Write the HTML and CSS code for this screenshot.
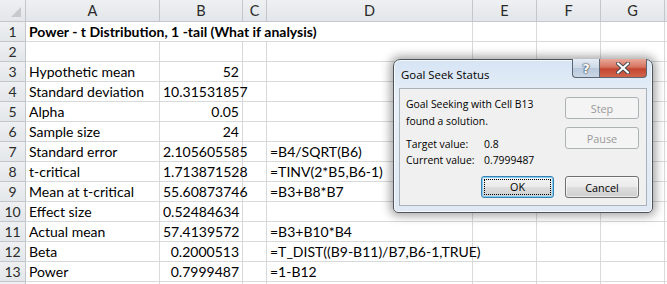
FILE: index.html
```html
<!DOCTYPE html>
<html lang="en">
<head>
    <meta charset="UTF-8">
    <title>Power - t Distribution</title>
    <link rel="stylesheet" href="styles.css">
</head>
<body>
    <div class="sheet">
        <div class="hd corner">
            <svg width="26" height="22" viewBox="0 0 26 22"><polygon points="21,7 21,17 11,17" fill="#c6c9cd"/></svg>
        </div>
        <div class="hd col">A</div>
        <div class="hd col">B</div>
        <div class="hd col">C</div>
        <div class="hd col">D</div>
        <div class="hd col">E</div>
        <div class="hd col">F</div>
        <div class="hd col">G</div>
        <div class="hd col"></div>

        <div class="hd row">1</div>
        <div class="c title">Power - t Distribution, 1 -tail (What if analysis)</div>
        <div class="c"></div><div class="c"></div><div class="c"></div><div class="c"></div>

        <div class="hd row">2</div>
        <div class="c"></div><div class="c"></div><div class="c"></div><div class="c"></div><div class="c"></div><div class="c"></div><div class="c"></div><div class="c"></div>

        <div class="hd row">3</div>
        <div class="c">Hypothetic mean</div><div class="c num">52</div><div class="c"></div><div class="c"></div><div class="c"></div><div class="c"></div><div class="c"></div><div class="c"></div>

        <div class="hd row">4</div>
        <div class="c">Standard deviation</div><div class="c num">10.31531857</div><div class="c"></div><div class="c"></div><div class="c"></div><div class="c"></div><div class="c"></div><div class="c"></div>

        <div class="hd row">5</div>
        <div class="c">Alpha</div><div class="c num">0.05</div><div class="c"></div><div class="c"></div><div class="c"></div><div class="c"></div><div class="c"></div><div class="c"></div>

        <div class="hd row">6</div>
        <div class="c">Sample size</div><div class="c num">24</div><div class="c"></div><div class="c"></div><div class="c"></div><div class="c"></div><div class="c"></div><div class="c"></div>

        <div class="hd row">7</div>
        <div class="c">Standard error</div><div class="c num">2.105605585</div><div class="c"></div><div class="c">=B4/SQRT(B6)</div><div class="c"></div><div class="c"></div><div class="c"></div><div class="c"></div>

        <div class="hd row">8</div>
        <div class="c">t-critical</div><div class="c num">1.713871528</div><div class="c"></div><div class="c">=TINV(2*B5,B6-1)</div><div class="c"></div><div class="c"></div><div class="c"></div><div class="c"></div>

        <div class="hd row">9</div>
        <div class="c">Mean at t-critical</div><div class="c num">55.60873746</div><div class="c"></div><div class="c">=B3+B8*B7</div><div class="c"></div><div class="c"></div><div class="c"></div><div class="c"></div>

        <div class="hd row">10</div>
        <div class="c">Effect size</div><div class="c num">0.52484634</div><div class="c"></div><div class="c"></div><div class="c"></div><div class="c"></div><div class="c"></div><div class="c"></div>

        <div class="hd row">11</div>
        <div class="c">Actual mean</div><div class="c num">57.4139572</div><div class="c"></div><div class="c">=B3+B10*B4</div><div class="c"></div><div class="c"></div><div class="c"></div><div class="c"></div>

        <div class="hd row">12</div>
        <div class="c">Beta</div><div class="c num">0.2000513</div><div class="c"></div><div class="c">=T_DIST((B9-B11)/B7,B6-1,TRUE)</div><div class="c"></div><div class="c"></div><div class="c"></div><div class="c"></div>

        <div class="hd row">13</div>
        <div class="c">Power</div><div class="c num">0.7999487</div><div class="c"></div><div class="c">=1-B12</div><div class="c"></div><div class="c"></div><div class="c"></div><div class="c"></div>

        <div class="hd row"></div>
        <div class="c"></div><div class="c"></div><div class="c"></div><div class="c"></div><div class="c"></div><div class="c"></div><div class="c"></div><div class="c"></div>
    </div>

    <div class="dialog">
        <div class="titlebar">
            <span class="title-text">Goal Seek Status</span>
            <div class="caption-btns">
                <span class="cap help">?</span>
                <span class="cap close">
                    <svg width="16" height="12" viewBox="0 0 16 12">
                        <path d="M3 1.5 L13 10.5 M13 1.5 L3 10.5" stroke="#404850" stroke-width="4" stroke-linecap="round"/>
                        <path d="M3 1.5 L13 10.5 M13 1.5 L3 10.5" stroke="#ffffff" stroke-width="2.2" stroke-linecap="round"/>
                    </svg>
                </span>
            </div>
        </div>
        <div class="panel">
            <div class="panel-top">
                <div class="msg">
                    <p>Goal Seeking with Cell B13<br>found a solution.</p>
                    <div class="vals">
                        <span>Target value:</span><span>0.8</span>
                        <span>Current value:</span><span>0.7999487</span>
                    </div>
                </div>
                <div class="side">
                    <button class="btn" disabled>Step</button>
                    <button class="btn" disabled>Pause</button>
                </div>
            </div>
            <div class="panel-foot">
                <button class="btn default"><span class="focus">OK</span></button>
                <button class="btn">Cancel</button>
            </div>
        </div>
    </div>
</body>
</html>
```

FILE: styles.css
```css
body {
    margin: 0;
    background: #ffffff;
    overflow: hidden;
    font-family: Lato, "Liberation Sans", sans-serif;
}
.sheet {
    display: grid;
    grid-template-columns: 26px 134px 83px 24px 206px 64px 64px 64px 1fr;
    grid-template-rows: 22px repeat(14, 20px);
    width: 667px;
    height: 284px;
    overflow: hidden;
}
.c, .hd {
    box-sizing: border-box;
    border-right: 1px solid #d8d9db;
    border-bottom: 1px solid #d8d9db;
    font-size: 14px;
    line-height: 19px;
    white-space: nowrap;
    color: #000;
}
.c {
    padding: 0 3px;
    overflow: visible;
}
.num {
    text-align: right;
}
.title {
    grid-column: span 4;
    font-weight: bold;
}
.hd {
    background: linear-gradient(#eef0f2, #e3e6ea);
    border-color: #c3c7cc;
    color: #2b2b2b;
    text-align: center;
}
.col {
    line-height: 21px;
    font-size: 14.5px;
}
.corner {
    padding: 0;
}
.corner svg {
    display: block;
}

/* Goal Seek dialog */
.dialog {
    position: absolute;
    left: 393px;
    top: 59px;
    width: 260px;
    height: 154px;
    box-sizing: border-box;
    border: 1px solid #4f555c;
    border-radius: 7px 7px 5px 5px;
    background: linear-gradient(#d6e4f4, #e8eff8 25%, #dfe8f3);
    box-shadow: 0 0 10px 3px rgba(0, 0, 0, 0.35), inset 0 0 0 1px rgba(255, 255, 255, 0.7);
    display: flex;
    flex-direction: column;
    font-family: "Open Sans", "DejaVu Sans", sans-serif;
    font-size: 10.4px;
    color: #000;
}
.titlebar {
    height: 28px;
    display: flex;
    justify-content: space-between;
    align-items: flex-start;
}
.title-text {
    padding-left: 7px;
    line-height: 29px;
    font-size: 11.4px;
}
.caption-btns {
    display: flex;
    margin-top: -1px;
    margin-right: 5px;
}
.cap {
    height: 19px;
    box-sizing: border-box;
    border: 1px solid #5d6670;
    border-top: none;
    display: flex;
    align-items: center;
    justify-content: center;
}
.help {
    width: 27px;
    border-radius: 0 0 0 4px;
    border-right: none;
    background: linear-gradient(#e4ecf5, #cdd9e7 50%, #b9c9dc 51%, #c9d6e5);
    font-family: "DejaVu Sans", sans-serif;
    font-weight: bold;
    font-size: 13px;
    color: #ffffff;
    text-shadow: 0 0 1px #3c4650, 0 0 1px #3c4650, 0 0 2px #3c4650;
}
.close {
    width: 48px;
    border-radius: 0 0 4px 0;
    background: linear-gradient(#eaa899, #d5735f 45%, #c44530 55%, #d2644c);
}
.close svg {
    display: block;
}
.panel {
    flex: 1;
    margin: 0 5px 6px 5px;
    border: 1px solid #a9b1ba;
    background: #f0f0f0;
    display: flex;
    flex-direction: column;
    padding: 8px 7px 7px 6px;
}
.panel-top {
    display: flex;
    justify-content: space-between;
}
.msg p {
    margin: -1px 0 0 0;
    line-height: 17px;
}
.vals {
    display: grid;
    grid-template-columns: 78px auto;
    line-height: 16px;
    margin-top: 6px;
}
.side {
    display: flex;
    flex-direction: column;
    gap: 8px;
}
.btn {
    width: 74px;
    height: 22px;
    box-sizing: border-box;
    border: 1px solid #707070;
    border-radius: 3px;
    background: linear-gradient(#f3f3f3, #ebebeb 48%, #dddddd 52%, #cfcfcf);
    font-family: "Open Sans", "DejaVu Sans", sans-serif;
    font-size: 10.8px;
    color: #000;
    padding: 0;
    box-shadow: inset 0 0 0 1px rgba(255, 255, 255, 0.6);
}
.btn:disabled {
    border-color: #adb2b5;
    background: #f4f4f4;
    color: #9a9a9a;
    box-shadow: none;
}
.panel-foot {
    margin-top: auto;
    display: flex;
    justify-content: flex-end;
    gap: 11px;
}
.default {
    width: 73px;
    border-color: #3c7fb1;
    box-shadow: inset 0 0 0 1px #7fd0f6;
    padding: 2px;
}
.focus {
    display: block;
    height: 100%;
    box-sizing: border-box;
    border: 1px dotted #000;
    line-height: 14px;
}
```
